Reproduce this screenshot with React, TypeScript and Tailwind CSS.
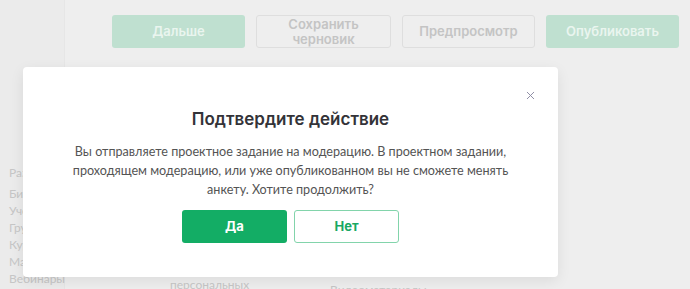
import { X } from 'lucide-react';

const sidebar = ['Библиотека', 'Учебные курсы', 'Группы', 'Курсы', 'Материалы', 'Вебинары'];

export default function App() {
    return (
        <div className="relative w-[690px] h-[289px] overflow-hidden bg-[#eeeeee] font-['Lato',sans-serif]">
            {/* Page behind the overlay */}
            <div className="flex h-full">
                <div className="w-[65px] shrink-0 bg-[#ebebeb] border-r border-[#e6e6e6]"></div>
                <div className="flex-1"></div>
            </div>

            <div className="absolute left-[112px] top-[15px] flex gap-[11px] font-['Inter',sans-serif] text-[13px] font-semibold">
                <div className="w-[133px] h-[33px] rounded-[3px] bg-[#bfe0d0] text-[#eaf5ef] flex items-center justify-center">Дальше</div>
                <div className="w-[135px] h-[33px] rounded-[3px] border border-[#dedede] text-[#c4c4c4] flex items-center justify-center text-center leading-[15px]">Сохранить<br />черновик</div>
                <div className="w-[133px] h-[33px] rounded-[3px] border border-[#dedede] text-[#c4c4c4] flex items-center justify-center">Предпросмотр</div>
                <div className="w-[133px] h-[33px] rounded-[3px] bg-[#bfe0d0] text-[#eaf5ef] flex items-center justify-center">Опубликовать</div>
            </div>

            <div className="absolute left-[9px] top-[164px] flex flex-col text-[12px] leading-[17px] text-[#c6c6c6]">
                <div className="mb-[4px]">Разделы</div>
                {sidebar.map((s) => (
                    <div key={s}>{s}</div>
                ))}
            </div>
            <div className="absolute left-[170px] top-[276px] text-[12px] text-[#c6c6c6]">персональных</div>
            <div className="absolute left-[330px] top-[281px] text-[12px] text-[#c6c6c6]">Видеоматериалы</div>

            {/* Modal */}
            <div className="absolute left-[23px] top-[67px] w-[535px] h-[210px] bg-white rounded-[4px] shadow-[0_4px_14px_rgba(0,0,0,0.08)] flex flex-col items-center">
                <button className="absolute right-[21px] top-[22px] text-[#8d8ca3]">
                    <X size={13} strokeWidth={1.8} />
                </button>
                <h3 className="mt-[41px] font-['Inter',sans-serif] text-[17px] leading-[22px] font-semibold text-[#333338]">
                    Подтвердите действие
                </h3>
                <p className="mt-[12px] text-center text-[12.6px] leading-[19px] text-[#545454]">
                    Вы отправляете проектное задание на модерацию. В проектном задании,<br />
                    проходящем модерацию, или уже опубликованном вы не сможете менять<br />
                    анкету. Хотите продолжить?
                </p>
                <div className="mt-[11px] flex gap-[7px] font-['Inter',sans-serif] text-[13px] font-bold">
                    <button className="w-[105px] h-[33px] rounded-[3px] bg-[#13ad65] text-white">Да</button>
                    <button className="w-[105px] h-[33px] rounded-[3px] border border-[#82d4ab] text-[#19a864]">Нет</button>
                </div>
            </div>
        </div>
    );
}
